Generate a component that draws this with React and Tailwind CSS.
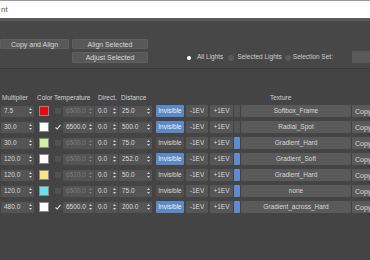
import React from 'react';

const rows = [
  { mult: '7.5', color: '#ff0000', checked: false, temp: '6500.0', dist: '25.0', invisible: true, bar: false, tex: 'Softbox_Frame' },
  { mult: '30.0', color: '#ffffff', checked: true, temp: '6500.0', dist: '500.0', invisible: true, bar: false, tex: 'Radial_Spot' },
  { mult: '30.0', color: '#d6eb9c', checked: false, temp: '6500.0', dist: '75.0', invisible: false, bar: true, tex: 'Gradient_Hard' },
  { mult: '120.0', color: '#ffffff', checked: false, temp: '6500.0', dist: '252.0', invisible: true, bar: true, tex: 'Gradient_Soft' },
  { mult: '120.0', color: '#f6e87c', checked: false, temp: '6510.0', dist: '50.0', invisible: false, bar: true, tex: 'Gradient_Hard' },
  { mult: '120.0', color: '#5fe6f2', checked: false, temp: '6500.0', dist: '75.0', invisible: false, bar: true, tex: 'none' },
  { mult: '480.0', color: '#ffffff', checked: true, temp: '6500.0', dist: '200.0', invisible: true, bar: true, tex: 'Gradient_across_Hard' },
];

const Arrows = ({ dim }) => (
  <svg width="3" height="6" viewBox="0 0 3 6" className="shrink-0">
    <path d="M1.5 0 L3 2 L0 2 Z M1.5 6 L3 4 L0 4 Z" fill={dim ? '#7a7a7a' : '#cfcfcf'} />
  </svg>
);

const Spinner = ({ value, width, dim }) => (
  <div
    className={`flex h-[11px] shrink-0 items-center justify-between rounded-[1px] bg-[#545454] pl-[3px] pr-[2px] ${width} ${dim ? 'text-[#7c7c7c]' : 'text-[#d8d8d8]'}`}
  >
    <span>{value}</span>
    <Arrows dim={dim} />
  </div>
);

const Btn = ({ children, className }) => (
  <div className={`flex shrink-0 items-center justify-center rounded-[1px] text-[#d8d8d8] ${className}`}>{children}</div>
);

const App = () => {
  return (
    <div className="flex h-[260px] w-[370px] flex-col overflow-hidden bg-[#444444] font-['Liberation_Sans',Arial,sans-serif] text-[6.5px] leading-none">
      {/* window title strip */}
      <div className="flex h-[18px] items-center border-t border-[#9a9a9a] bg-white pl-[1px] text-[8px] text-[#555]">nt</div>
      <div className="h-[3px] bg-[#5a5a5a]" />

      {/* top controls */}
      <div className="flex h-[48px] items-start border-b border-[#3a3a3a] bg-[#474747] pt-[18px]">
        <Btn className="h-[10px] w-[69px] border border-[#5f5f5f] bg-[#585858] text-[7px]">Copy and Align</Btn>
        <div className="ml-[3px] flex flex-col gap-[3px] text-[7px]">
          <Btn className="h-[10px] w-[76px] border border-[#5f5f5f] bg-[#585858]">Align Selected</Btn>
          <Btn className="h-[11px] w-[76px] border border-[#5f5f5f] bg-[#585858]">Adjust Selected</Btn>
        </div>
        <div className="ml-[39px] mt-[13px] flex h-[11px] items-center text-[#cfcfcf]">
          <span className="h-[4px] w-[4px] rounded-full bg-white" />
          <span className="ml-[6px]">All Lights</span>
          <span className="ml-[5px] h-[6px] w-[6px] rounded-full bg-[#5a5a5a]" />
          <span className="ml-[3px]">Selected Lights</span>
          <span className="ml-[3px] h-[6px] w-[6px] rounded-full bg-[#5a5a5a]" />
          <span className="ml-[2px]">Selection Set:</span>
        </div>
        <div className="ml-auto mt-[12px] h-[12px] w-[18px] bg-[#5a5a5a]" />
      </div>

      {/* table */}
      <div className="flex flex-col pt-[25px] text-[#d2d2d2]">
        <div className="relative h-[7px]">
          <span className="absolute left-[2px] top-[1px]">Multiplier</span>
          <span className="absolute left-[37px] top-[1px]">Color</span>
          <span className="absolute left-[54px] top-[1px]">Temperature</span>
          <span className="absolute left-[98px] top-[1px]">Direct.</span>
          <span className="absolute left-[121px] top-[1px]">Distance</span>
          <span className="absolute left-[270px] top-[1px]">Texture</span>
        </div>
        <div className="mt-[2px] flex flex-col">
          {rows.map((r, i) => (
            <div key={i} className="flex h-[16px] w-max items-center">
              <div className="ml-[1px] shrink-0">
                <Spinner value={r.mult} width="w-[33px]" />
              </div>
              <div className="ml-[5px] h-[10px] w-[10px] shrink-0 border border-[#8a8a8a]" style={{ backgroundColor: r.color }} />
              <div className="ml-[5px] flex h-[7px] w-[7px] shrink-0 items-center justify-center">
                {r.checked ? (
                  <svg width="6" height="6" viewBox="0 0 6 6">
                    <path d="M0.5 3.5 L2.2 5 L5.5 0.8" stroke="#e0e0e0" strokeWidth="1.1" fill="none" />
                  </svg>
                ) : (
                  <span className="h-[6px] w-[6px] bg-[#525252]" />
                )}
              </div>
              <div className="ml-[2px] shrink-0">
                <Spinner value={r.temp} width="w-[31px]" dim={!r.checked} />
              </div>
              <div className="ml-[1px] shrink-0">
                <Spinner value="0.0" width="w-[23px]" />
              </div>
              <div className="ml-[1px] shrink-0">
                <Spinner value={r.dist} width="w-[33px]" />
              </div>
              <Btn className={`ml-[4px] h-[12px] w-[28px] ${r.invisible ? 'bg-[#5a89c6] text-[#eef3fa]' : 'bg-[#4f4f4f]'}`}>Invisible</Btn>
              <Btn className="ml-[2px] h-[12px] w-[22px] bg-[#565656]">-1EV</Btn>
              <Btn className="ml-[2px] h-[12px] w-[23px] bg-[#565656]">+1EV</Btn>
              <div className={`ml-[1px] h-[12px] w-[6px] shrink-0 rounded-[1px] ${r.bar ? 'bg-[#5b8bd0]' : 'bg-[#555555]'}`} />
              <Btn className="ml-[1px] h-[12px] w-[110px] bg-[#5a5a5a]">{r.tex}</Btn>
              <Btn className="ml-[1px] h-[12px] w-[26px] justify-start bg-[#5a5a5a] pl-[3px] text-[7px]">Copy</Btn>
            </div>
          ))}
        </div>
      </div>
    </div>
  );
};

export default App;
